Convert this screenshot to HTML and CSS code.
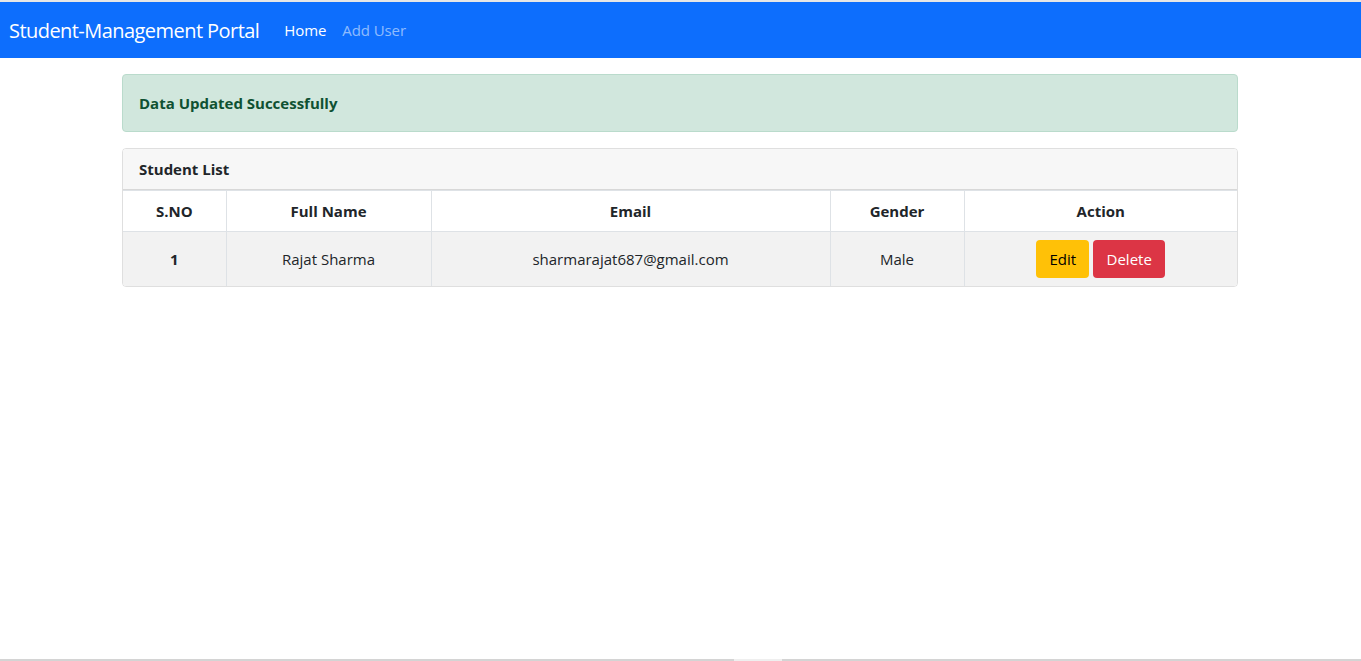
FILE: index.html
```html
<!DOCTYPE html>
<html>
<head>
<meta charset="utf-8">
<link rel="stylesheet" href="styles.css">
</head>
<body>
<nav class="navbar">
  <span class="brand">Student-Management Portal</span>
  <a class="nav-link active">Home</a>
  <a class="nav-link">Add User</a>
</nav>
<main class="container">
  <div class="alert">Data Updated Successfully</div>
  <div class="card">
    <div class="card-header">Student List</div>
    <table class="table">
      <thead>
        <tr>
          <th class="c-sno">S.NO</th>
          <th class="c-name">Full Name</th>
          <th class="c-email">Email</th>
          <th class="c-gender">Gender</th>
          <th>Action</th>
        </tr>
      </thead>
      <tbody>
        <tr>
          <th>1</th>
          <td>Rajat Sharma</td>
          <td>sharmarajat687@gmail.com</td>
          <td>Male</td>
          <td><button class="btn btn-warning">Edit</button> <button class="btn btn-danger">Delete</button></td>
        </tr>
      </tbody>
    </table>
  </div>
</main>
<div class="hscroll"><div class="thumb"></div></div>
</body>
</html>
```
FILE: styles.css
```css
* { box-sizing: border-box; }
html, body { height: 100%; }
body {
  margin: 0;
  font-family: "Open Sans", "Noto Sans", sans-serif;
  font-size: 16px;
  line-height: 1.5;
  color: #212529;
  background: #fff;
  border-top: 2px solid #e6e6e6;
  position: relative;
}
.navbar {
  background: #0d6efd;
  height: 56px;
  display: flex;
  align-items: center;
  padding: 2px 9px 0;
}
.brand {
  color: #fff;
  font-size: 20px;
  margin-right: 17px;
  letter-spacing: -0.55px;
}
.nav-link {
  color: rgba(255,255,255,.55);
  font-size: 15px;
  padding: 0 8px 1px;
  text-decoration: none;
  letter-spacing: -0.1px;
}
.nav-link.active { color: #fff; }
.container {
  width: 1116px;
  margin: 16px 0 0 calc(50% - 558.5px);
}
.alert {
  background: #d1e7dd;
  border: 1px solid #badbcc;
  color: #0f5132;
  font-weight: 700;
  font-size: 15px;
  border-radius: 4px;
  height: 58px;
  padding: 0 16px;
  display: flex;
  align-items: center;
  margin-bottom: 16px;
}
.card {
  border: 1px solid rgba(0,0,0,.125);
  border-radius: 4px;
  overflow: hidden;
}
.card-header {
  background: #f7f7f7;
  border-bottom: 1px solid rgba(0,0,0,.125);
  height: 41px;
  padding: 0 16px;
  display: flex;
  align-items: center;
  font-weight: 700;
  font-size: 15px;
}
.table {
  width: 100%;
  border-collapse: collapse;
  font-size: 15px;
}
.table th, .table td {
  border: 1px solid #dee2e6;
  text-align: center;
  vertical-align: middle;
  padding: 7px 8px;
}
.table tr > :first-child { border-left: 0; }
.table tr > :last-child { border-right: 0; }
.table tbody tr:last-child > * { border-bottom: 0; }
.table thead th { height: 41px; font-weight: 700; }
.table tbody tr > * { height: 54px; background: #f2f2f2; font-weight: 400; }
.table tbody th { font-weight: 700; }
.c-sno { width: 103px; }
.c-name { width: 205px; }
.c-email { width: 399px; }
.c-gender { width: 134px; }
.btn {
  font-family: inherit;
  font-size: 15px;
  border: 0;
  border-radius: 4px;
  height: 38px;
  padding: 0 12px;
  vertical-align: middle;
}
.btn-warning { background: #ffc107; color: #000; width: 53px; }
.btn-danger { background: #dc3545; color: #fff; width: 72px; }
.hscroll {
  position: absolute;
  left: 0; right: 0; bottom: 0;
  height: 2px;
  background: #d4d4d4;
}
.thumb { margin-left: 734px; width: 48px; height: 2px; background: #efefef; }
```
